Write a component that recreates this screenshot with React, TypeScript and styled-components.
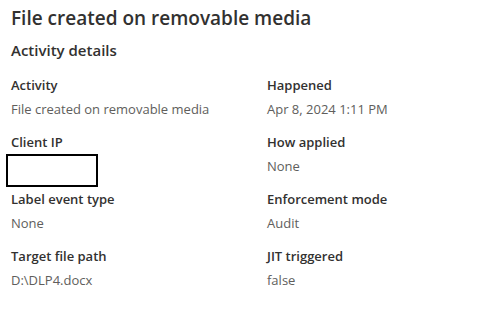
import React from "react";
import styled, { createGlobalStyle } from "styled-components";

const GlobalStyle = createGlobalStyle`
  html, body {
    margin: 0;
    padding: 0;
    background: #ffffff;
  }
  body {
    font-family: "Open Sans", "Noto Sans", "Liberation Sans", sans-serif;
    color: #323130;
  }
`;

const Panel = styled.div`
  padding: 4px 11px 0;
  width: 483px;
  box-sizing: border-box;
`;

const Title = styled.h1`
  margin: 0;
  font-size: 19px;
  line-height: 28px;
  font-weight: 600;
  color: #323130;
`;

const SectionTitle = styled.h2`
  margin: 7px 0 0;
  font-size: 15px;
  line-height: 22px;
  font-weight: 600;
  color: #323130;
`;

const DetailsGrid = styled.div`
  display: grid;
  grid-template-columns: 256px 1fr;
  grid-auto-rows: 57px;
  margin-top: 14px;
`;

const Field = styled.div`
  display: flex;
  flex-direction: column;
  gap: 4px;
  position: relative;
`;

const Label = styled.div`
  font-size: 13px;
  line-height: 20px;
  font-weight: 600;
  color: #323130;
`;

const Value = styled.div`
  font-size: 13px;
  line-height: 20px;
  color: #605e5c;
  min-height: 20px;
`;

const Redaction = styled.div`
  position: absolute;
  left: -5px;
  top: 22px;
  width: 88px;
  height: 29px;
  border: 2px solid #000000;
  background: #ffffff;
`;

type Detail = { label: string; value: string; redacted?: boolean };

const details: Detail[] = [
  { label: "Activity", value: "File created on removable media" },
  { label: "Happened", value: "Apr 8, 2024 1:11 PM" },
  { label: "Client IP", value: "", redacted: true },
  { label: "How applied", value: "None" },
  { label: "Label event type", value: "None" },
  { label: "Enforcement mode", value: "Audit" },
  { label: "Target file path", value: "D:\\DLP4.docx" },
  { label: "JIT triggered", value: "false" },
];

export default function App() {
  return (
    <>
      <GlobalStyle />
      <Panel>
        <Title>File created on removable media</Title>
        <SectionTitle>Activity details</SectionTitle>
        <DetailsGrid>
          {details.map((d) => (
            <Field key={d.label}>
              <Label>{d.label}</Label>
              <Value>{d.value}</Value>
              {d.redacted && <Redaction />}
            </Field>
          ))}
        </DetailsGrid>
      </Panel>
    </>
  );
}
